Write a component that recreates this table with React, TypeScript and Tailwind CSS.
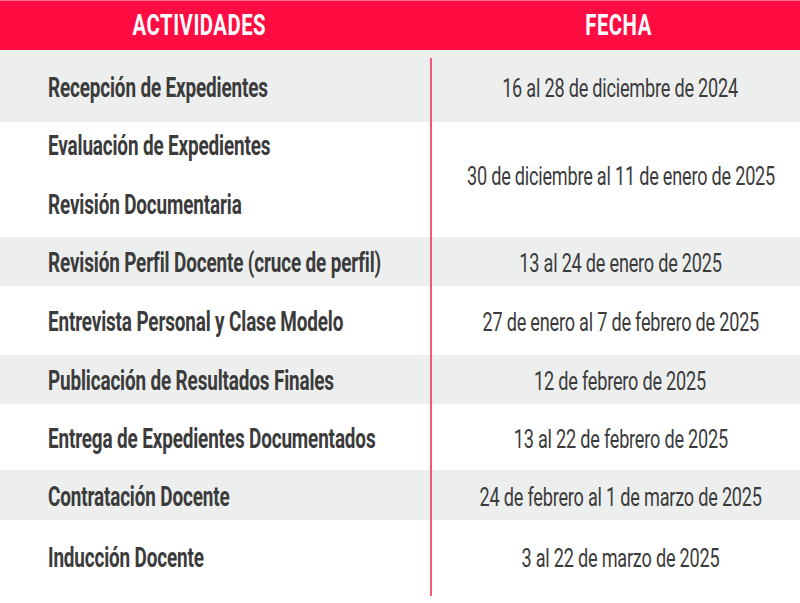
import React from "react"

// cronograma: actividades y fechas
type Row = { acts: string[]; fecha: string; cls: string }

const rows: Row[] = [
  { acts: ["Recepción de Expedientes"], fecha: "16 al 28 de diciembre de 2024", cls: "h-[72px] bg-[#edeeee]" },
  { acts: ["Evaluación de Expedientes", "Revisión Documentaria"], fecha: "30 de diciembre al 11 de enero de 2025", cls: "h-[115px] bg-white" },
  { acts: ["Revisión Perfil Docente (cruce de perfil)"], fecha: "13 al 24 de enero de 2025", cls: "h-[49px] bg-[#edeeee]" },
  { acts: ["Entrevista Personal y Clase Modelo"], fecha: "27 de enero al 7 de febrero de 2025", cls: "h-[69px] bg-white" },
  { acts: ["Publicación de Resultados Finales"], fecha: "12 de febrero de 2025", cls: "h-[49px] bg-[#edeeee]" },
  { acts: ["Entrega de Expedientes Documentados"], fecha: "13 al 22 de febrero de 2025", cls: "h-[66px] bg-white" },
  { acts: ["Contratación Docente"], fecha: "24 de febrero al 1 de marzo de 2025", cls: "h-[50px] bg-[#edeeee]" },
  { acts: ["Inducción Docente"], fecha: "3 al 22 de marzo de 2025", cls: "h-[83px] bg-white pb-[10px]" },
]

export default function App() {
  return (
    <div className="w-[800px] h-[603px] bg-white overflow-hidden font-['Roboto',sans-serif] text-[#3b3b3b]">
      {/* header */}
      <div className="flex h-[50px] bg-[#ff0c43] border-t border-[#ff7590] text-white">
        <div className="w-[431px] shrink-0 flex items-center justify-center pr-[32px]">
          <span className="inline-block scale-x-[0.7] text-[29px] font-bold tracking-wide leading-none">ACTIVIDADES</span>
        </div>
        <div className="flex-1 min-w-0 flex items-center justify-center pl-[6px]">
          <span className="inline-block scale-x-[0.7] text-[29px] font-bold tracking-wide leading-none">FECHA</span>
        </div>
      </div>

      <div className="relative">
        {rows.map((r, i) => (
          <div key={i} className={`flex ${r.cls}`}>
            <div className={`w-[431px] shrink-0 min-w-0 pl-12 flex flex-col justify-center ${r.acts.length > 1 ? "gap-[29px] pb-[8px]" : "pt-[3px]"}`}>
              {r.acts.map((a) => (
                <span key={a} className="block origin-left scale-x-[0.7] whitespace-nowrap text-[27px] font-bold leading-[30px] tracking-[-0.2px]">
                  {a}
                </span>
              ))}
            </div>
            <div className={`flex-1 min-w-0 flex items-center justify-center pl-[10px] ${r.acts.length > 1 ? "pb-[8px]" : "pt-[3px]"}`}>
              <span className="inline-block shrink-0 scale-x-[0.71] whitespace-nowrap text-[25.5px] font-normal leading-[30px] tracking-[-0.3px]">
                {r.fecha}
              </span>
            </div>
          </div>
        ))}
        {/* linea divisoria */}
        <div className="absolute left-[430px] top-[8px] bottom-[7px] w-[2px] bg-[#f1587a]" />
      </div>
    </div>
  )
}
